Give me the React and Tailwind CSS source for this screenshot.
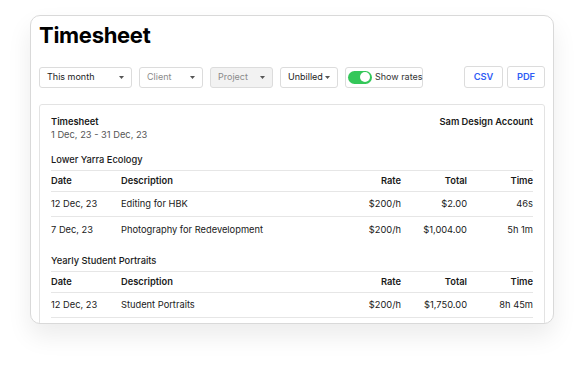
import React from "react";

const Caret = () => (
  <svg width="5" height="3" viewBox="0 0 5 3" className="ml-auto shrink-0">
    <path d="M0 0h5L2.5 3z" fill="#555" />
  </svg>
);

const Select = ({ label, width, muted, disabled }) => (
  <div
    className={`flex items-center h-[21px] pl-[7px] pr-[7px] border border-[#dcdcdc] rounded-[3px] text-[9px] whitespace-nowrap ${
      disabled ? "bg-[#f2f2f2]" : "bg-white"
    } ${muted ? "text-[#8a8a8a]" : "text-[#222]"}`}
    style={{ width }}
  >
    <span>{label}</span>
    <Caret />
  </div>
);

const sections = [
  {
    name: "Lower Yarra Ecology",
    rows: [
      ["12 Dec, 23", "Editing for HBK", "$200/h", "$2.00", "46s"],
      ["7 Dec, 23", "Photography for Redevelopment", "$200/h", "$1,004.00", "5h 1m"],
    ],
  },
  {
    name: "Yearly Student Portraits",
    rows: [["12 Dec, 23", "Student Portraits", "$200/h", "$1,750.00", "8h 45m"]],
  },
];

const Row = ({ cells, head, last }) => (
  <div
    className={`flex items-center ${last ? "" : "border-b border-[#e6e6e6]"} ${
      head ? "h-[21px] font-semibold" : "h-[25px]"
    }`}
  >
    <div className="w-[70px]">{cells[0]}</div>
    <div className="flex-1">{cells[1]}</div>
    <div className="w-[80px] text-right">{cells[2]}</div>
    <div className="w-[66px] text-right">{cells[3]}</div>
    <div className="w-[66px] text-right">{cells[4]}</div>
  </div>
);

export default function App() {
  return (
    <div className="w-[584px] h-[368px] bg-white pt-[15px] px-[30px] overflow-hidden font-['Inter',sans-serif]">
      <div className="h-[309px] border border-[#d9d9d9] rounded-[10px] bg-white shadow-[0_12px_24px_rgba(0,0,0,0.08)] overflow-hidden px-2">
        <h1 className="text-[22px] font-bold text-black leading-[28px] mt-[5px] tracking-[-0.3px]">
          Timesheet
        </h1>

        <div className="flex items-center mt-[17px] gap-[7px]">
          <Select label="This month" width={93} />
          <Select label="Client" width={64} muted />
          <Select label="Project" width={63} muted disabled />
          <Select label="Unbilled" width={58} />
          <div className="flex items-center h-[21px] w-[78px] border border-[#dcdcdc] rounded-[3px] px-[2px] gap-[3px] text-[9px] text-[#333] whitespace-nowrap">
            <div className="w-[24px] h-[13px] rounded-full bg-[#34c759] flex items-center justify-end pr-[2px] shrink-0">
              <div className="w-[10px] h-[10px] rounded-full bg-white" />
            </div>
            <span>Show rates</span>
          </div>
          <div className="ml-auto flex gap-[4px]">
            <button className="h-[22px] w-[39px] border border-[#dcdcdc] rounded-[3px] text-[9.3px] font-semibold text-[#2f5cf5]">
              CSV
            </button>
            <button className="h-[22px] w-[38px] border border-[#dcdcdc] rounded-[3px] text-[9.3px] font-semibold text-[#2f5cf5]">
              PDF
            </button>
          </div>
        </div>

        <div className="mt-[16px] border border-[#e3e3e3] rounded-[3px] px-[11px] pt-[11px] text-[9.3px] leading-[12px] text-[#1a1a1a] h-[240px]">
          <div className="flex justify-between font-semibold">
            <span>Timesheet</span>
            <span>Sam Design Account</span>
          </div>
          <div className="text-[#555] mt-[1px]">1 Dec, 23 - 31 Dec, 23</div>

          {sections.map((s) => (
            <div key={s.name} className="mt-[13px]">
              <div className="font-medium pb-[4px] border-b border-[#e6e6e6]">{s.name}</div>
              <Row head cells={["Date", "Description", "Rate", "Total", "Time"]} />
              {s.rows.map((r, j) => (
                <Row key={j} cells={r} last={j === s.rows.length - 1 && s.rows.length > 1} />
              ))}
            </div>
          ))}
        </div>
      </div>
    </div>
  );
}
